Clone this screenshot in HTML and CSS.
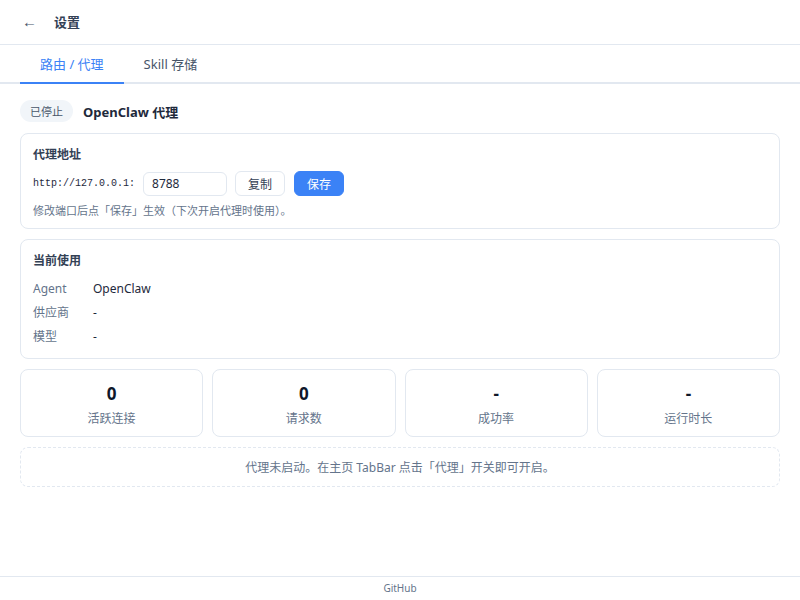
FILE: index.html
```html
<!doctype html>
<html lang="zh-CN">
  <head>
    <meta charset="UTF-8" />
    <meta name="viewport" content="width=device-width, initial-scale=1.0" />
    <title>设置</title>
    <link rel="stylesheet" href="styles.css">
  </head>
  <body>
    <div class="app">
      <header class="topbar">
        <button class="back">←</button>
        <span class="title">设置</span>
      </header>

      <nav class="tabs">
        <div class="tab active">路由 / 代理</div>
        <div class="tab">Skill 存储</div>
      </nav>

      <main class="content">
        <div class="status-row">
          <span class="badge">已停止</span>
          <span class="status-name">OpenClaw 代理</span>
        </div>

        <section class="card">
          <h3>代理地址</h3>
          <div class="addr-row">
            <code class="host">http://127.0.0.1:</code>
            <input class="port" type="text" value="8788" />
            <button class="btn">复制</button>
            <button class="btn primary">保存</button>
          </div>
          <p class="hint">修改端口后点「保存」生效（下次开启代理时使用）。</p>
        </section>

        <section class="card card-usage">
          <h3>当前使用</h3>
          <div class="kv"><span class="k">Agent</span><span class="v">OpenClaw</span></div>
          <div class="kv"><span class="k">供应商</span><span class="v">-</span></div>
          <div class="kv"><span class="k">模型</span><span class="v">-</span></div>
        </section>

        <div class="stats">
          <div class="stat"><div class="num">0</div><div class="label">活跃连接</div></div>
          <div class="stat"><div class="num">0</div><div class="label">请求数</div></div>
          <div class="stat"><div class="num">-</div><div class="label">成功率</div></div>
          <div class="stat"><div class="num">-</div><div class="label">运行时长</div></div>
        </div>

        <div class="notice">代理未启动。在主页 TabBar 点击「代理」开关即可开启。</div>
      </main>

      <footer class="footer">GitHub</footer>
    </div>
  </body>
</html>
```

FILE: styles.css
```css
* {
  box-sizing: border-box;
}
body {
  margin: 0;
  font-family: "Noto Sans", "Noto Sans CJK SC", sans-serif;
  color: #1e293b;
  background: #fff;
}
.app {
  display: flex;
  flex-direction: column;
  height: 100vh;
}
.topbar {
  display: flex;
  align-items: center;
  height: 45px;
  padding: 0 0 2px 17px;
  border-bottom: 1px solid #e2e8f0;
}
.back {
  border: none;
  background: none;
  font-size: 15px;
  color: #475569;
  padding: 0 5px;
  margin-right: 12px;
  cursor: pointer;
}
.title {
  font-size: 13px;
  font-weight: 700;
  color: #334155;
}
.tabs {
  display: flex;
  padding: 0 20px;
  border-bottom: 2px solid #e2e8f0;
}
.tab {
  padding: 9px 20px 9px;
  font-size: 13px;
  color: #475569;
  margin-bottom: -2px;
  border-bottom: 2px solid transparent;
}
.tab.active {
  color: #3b82f6;
  border-bottom-color: #3b82f6;
}
.content {
  flex: 1;
  padding: 17px 20px;
  display: flex;
  flex-direction: column;
  gap: 10px;
}
.status-row {
  display: flex;
  align-items: center;
  gap: 10px;
  margin-top: -1px;
  margin-bottom: 1px;
}
.badge {
  background: #f1f5f9;
  color: #475569;
  font-size: 11px;
  padding: 3px 10px;
  border-radius: 11px;
}
.status-name {
  font-size: 13px;
  font-weight: 700;
  color: #1e293b;
}
.card {
  border: 1px solid #e2e8f0;
  border-radius: 8px;
  padding: 11px 12px 10px;
}
.card-usage {
  padding-bottom: 9px;
}
.card h3 {
  margin: 0 0 8px;
  font-size: 12px;
  font-weight: 700;
  color: #334155;
}
.addr-row {
  display: flex;
  align-items: center;
  gap: 8px;
}
.host {
  font-family: "Liberation Mono", "DejaVu Sans Mono", monospace;
  font-size: 10px;
  color: #1e293b;
}
.port {
  width: 84px;
  height: 24px;
  border: 1px solid #e2e8f0;
  border-radius: 6px;
  padding: 0 8px;
  font-size: 12px;
  font-family: inherit;
  color: #1e293b;
}
.btn {
  height: 25px;
  padding: 0 12px;
  border: 1px solid #e2e8f0;
  border-radius: 6px;
  background: #fff;
  font-size: 12px;
  font-family: inherit;
  color: #334155;
  cursor: pointer;
}
.btn.primary {
  background: #3b82f6;
  border-color: #3b82f6;
  color: #fff;
  margin-left: 1px;
}
.hint {
  margin: 6px 0 0;
  font-size: 11px;
  color: #64748b;
}
.kv {
  display: flex;
  font-size: 12px;
  line-height: 24px;
}
.kv .k {
  width: 60px;
  color: #64748b;
}
.kv .v {
  color: #1e293b;
}
.stats {
  display: grid;
  grid-template-columns: repeat(4, 1fr);
  gap: 9px;
}
.stat {
  border: 1px solid #e2e8f0;
  border-radius: 8px;
  height: 68px;
  padding-top: 3px;
  display: flex;
  flex-direction: column;
  align-items: center;
  justify-content: center;
}
.num {
  font-size: 17px;
  font-weight: 700;
  color: #0f172a;
  line-height: 22px;
}
.label {
  font-size: 12px;
  color: #64748b;
  margin-top: 4px;
}
.notice {
  border: 1px dashed #e2e8f0;
  border-radius: 8px;
  height: 40px;
  display: flex;
  align-items: center;
  justify-content: center;
  font-size: 12px;
  color: #64748b;
}
.footer {
  height: 24px;
  border-top: 1px solid #e2e8f0;
  text-align: center;
  font-size: 10px;
  line-height: 22px;
  color: #64748b;
}
```
